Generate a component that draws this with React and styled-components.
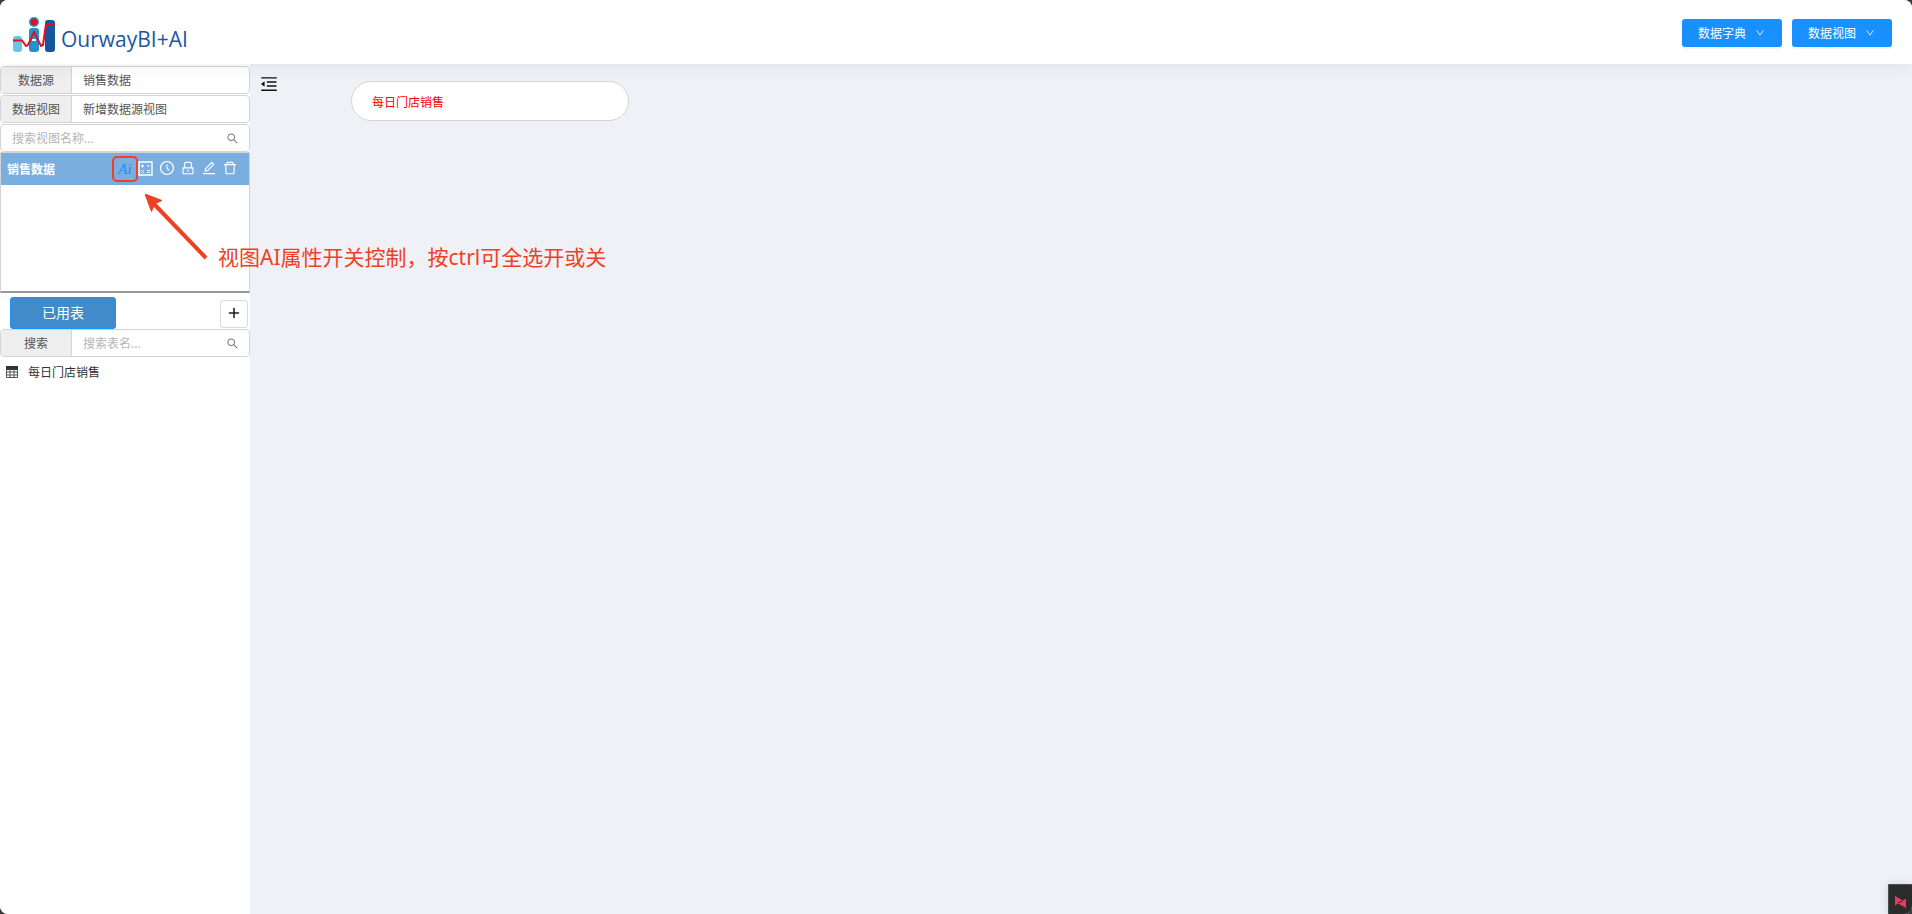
import React, { useState } from 'react'
import styled, { createGlobalStyle } from 'styled-components'
import {
  AiOutlineClockCircle,
  AiOutlineDelete,
  AiOutlineDown,
  AiOutlineEdit,
  AiOutlineLock,
  AiOutlineMenuFold,
  AiOutlinePlus,
  AiOutlineSearch,
} from 'react-icons/ai'

const Logo = () => (
  <svg width="42" height="36" viewBox="0 0 42 36" aria-hidden="true">
    <rect x="0" y="19" width="9" height="16" rx="3" fill="#6cc3ea" />
    <rect x="16" y="11" width="10" height="24" rx="3" fill="#2590d0" />
    <rect x="32" y="3" width="10" height="32" rx="3" fill="#15569f" />
    <circle cx="21" cy="5" r="5" fill="#2590d0" />
    <circle cx="21" cy="5" r="3.4" fill="#dc1420" />
    <rect x="19" y="22" width="4" height="2" fill="#fff" />
    <path d="M0 23.500h9l4 5.500 2-1 6-13 7 14 2-1 3-21h9" fill="none" stroke="#dc1420" strokeWidth="2" />
  </svg>
)

const CalcIcon = () => (
  <svg width="15" height="15" viewBox="0 0 15 15" fill="none" stroke="currentColor" aria-hidden="true">
    <path d="M1 1h13v13H1z" strokeWidth="1.400" />
    <path d="M3 5h3M4.500 3.500v3M9 5h3M3.300 9.300l2.400 2.400M5.700 9.300l-2.400 2.400M9 9.500h3M9 11.500h3" />
  </svg>
)

const TableIcon = () => (
  <svg width="12" height="12" viewBox="0 0 12 12" fill="none" aria-hidden="true">
    <path d="M0 0h12v4H0z" fill="#333" />
    <path d="M.5 3v8.500h11V3M0 6h12M0 9h12M4 3v9M8 3v9" stroke="#555" />
  </svg>
)

function App() {
  const [viewName, setViewName] = useState('')
  const [tableName, setTableName] = useState('')

  return (
    <Page>
      <GlobalStyle />
      <Header>
        <Brand href="#">
          <Logo />
          <BrandName>OurwayBI+AI</BrandName>
        </Brand>
        <HeaderActions>
          <DropButton type="button">数据字典<AiOutlineDown size={10} /></DropButton>
          <DropButton type="button">数据视图<AiOutlineDown size={10} /></DropButton>
        </HeaderActions>
      </Header>

      <Body>
        <Sidebar>
          <Group>
            <Addon htmlFor="source">数据源</Addon>
            <Field id="source" defaultValue="销售数据" />
          </Group>
          <Group>
            <Addon htmlFor="view">数据视图</Addon>
            <Field id="view" defaultValue="新增数据源视图" />
          </Group>
          <Group>
            <Field
              aria-label="搜索视图名称"
              placeholder="搜索视图名称..."
              value={viewName}
              onChange={(e) => setViewName(e.target.value)}
            />
            <SearchButton type="button" aria-label="搜索"><AiOutlineSearch size={13} /></SearchButton>
          </Group>

          <ViewList>
            <ViewItem>
              <ViewName>销售数据</ViewName>
              <ViewTools>
                <AiButton type="button"><i>Ai</i></AiButton>
                <ToolButton type="button" aria-label="计算字段"><CalcIcon /></ToolButton>
                <ToolButton type="button" aria-label="定时"><AiOutlineClockCircle size={16} /></ToolButton>
                <ToolButton type="button" aria-label="权限"><AiOutlineLock size={16} /></ToolButton>
                <ToolButton type="button" aria-label="编辑"><AiOutlineEdit size={16} /></ToolButton>
                <ToolButton type="button" aria-label="删除"><AiOutlineDelete size={16} /></ToolButton>
              </ViewTools>
            </ViewItem>
          </ViewList>

          <UsedBar>
            <UsedButton type="button">已用表</UsedButton>
            <AddButton type="button" aria-label="添加表"><AiOutlinePlus size={14} /></AddButton>
          </UsedBar>
          <Group>
            <Addon htmlFor="table">搜索</Addon>
            <Field
              id="table"
              placeholder="搜索表名..."
              value={tableName}
              onChange={(e) => setTableName(e.target.value)}
            />
            <SearchButton type="button" aria-label="搜索"><AiOutlineSearch size={13} /></SearchButton>
          </Group>
          <TableItem><TableIcon />每日门店销售</TableItem>
        </Sidebar>

        <Canvas>
          <FoldButton type="button" aria-label="收起"><AiOutlineMenuFold size={20} /></FoldButton>
          <Node>每日门店销售</Node>
        </Canvas>
      </Body>

      <Hint>
        <svg width="64" height="68" viewBox="0 0 64 68" aria-hidden="true">
          <path d="M9 10L61 64" stroke="#ee4123" strokeWidth="4" />
          <path d="M0 0l17 6.500-7 3-3.500 8z" fill="#ee4123" stroke="#ee4123" />
        </svg>
        <HintText>视图AI属性开关控制，按ctrl可全选开或关</HintText>
      </Hint>

      <Recorder type="button" aria-label="录制">
        <svg width="11" height="12" viewBox="0 0 11 12" aria-hidden="true">
          <path d="M0 0l8 4.500L0 9.500zM11 2.500V12L3 7.500z" fill="#e8385f" />
          <path d="M3 7l5-2.500" stroke="#2b2b2b" />
        </svg>
      </Recorder>
    </Page>
  )
}

export default App

const GlobalStyle = createGlobalStyle`
  * { box-sizing: border-box; }
  body {
    margin: 0;
    background: #3b3b3d;
    font-family: "Noto Sans", "Noto Sans CJK SC", sans-serif;
    font-size: 12px;
    color: #333;
  }
  button, input { font: inherit; color: inherit; }
  button { padding: 0; border: 0; background: none; cursor: pointer; }
`
const Page = styled.div`
  position: relative;
  display: flex;
  flex-direction: column;
  min-height: 100vh;
  overflow: hidden;
  border-radius: 8px;
  background: #f0f1f6;
`
const Header = styled.header`
  position: relative;
  z-index: 1;
  display: flex;
  justify-content: space-between;
  height: 64px;
  padding: 0 20px 0 13px;
  background: #fff;
  box-shadow: 0 2px 16px rgba(0, 0, 0, 0.07);
`
const Brand = styled.a`
  display: flex;
  gap: 6px;
  padding-top: 17px;
  text-decoration: none;
`
const BrandName = styled.span`
  padding-top: 7px;
  color: #1a58a0;
  font-family: "Open Sans", sans-serif;
  font-size: 21px;
  line-height: 30px;
`
const HeaderActions = styled.div`
  display: flex;
  align-items: flex-start;
  gap: 10px;
  padding-top: 19px;
`
const DropButton = styled.button`
  display: flex;
  align-items: center;
  gap: 9px;
  width: 100px;
  height: 28px;
  padding-left: 16px;
  border-radius: 3px;
  background: #1890ff;
  color: #fff;
  box-shadow: 0 2px 0 rgba(0, 0, 0, 0.04);
`
const Body = styled.div`
  display: flex;
  flex: 1;
`
const Sidebar = styled.aside`
  width: 250px;
  padding-top: 2px;
  background: #fff;
`
const Group = styled.div`
  display: flex;
  height: 28px;
  margin-bottom: 1px;
  overflow: hidden;
  border: 1px solid #d4d4d4;
  border-radius: 4px;
  background: #fff;
  color: #555;
`
const Addon = styled.label`
  flex: none;
  width: 71px;
  border-right: 1px solid #d4d4d4;
  background: #eee;
  line-height: 28px;
  text-align: center;
`
const Field = styled.input`
  flex: 1;
  min-width: 0;
  padding: 0 11px;
  border: 0;
  outline: 0;
  background: transparent;
  &::placeholder { color: #b5b5b5; }
`
const SearchButton = styled.button`
  display: flex;
  align-items: center;
  justify-content: center;
  width: 34px;
  color: #777;
`
const ViewList = styled.ul`
  height: 141px;
  margin: -1px 0 4px;
  padding: 0;
  border: 1px solid #d4d4d4;
  border-bottom: 2px solid #999;
  list-style: none;
`
const ViewItem = styled.li`
  display: flex;
  align-items: center;
  justify-content: space-between;
  height: 32px;
  padding: 0 9px 0 6px;
  background: #79aede;
  color: #fff;
`
const ViewName = styled.span`
  font-weight: 700;
`
const ViewTools = styled.div`
  display: flex;
  align-items: center;
`
const ToolButton = styled.button`
  display: flex;
  align-items: center;
  justify-content: center;
  width: 21px;
  height: 28px;
  padding-bottom: 2px;
`
const AiButton = styled(ToolButton)`
  width: 26px;
  height: 26px;
  margin-right: -3px;
  padding: 0;
  border: 2px solid #ee4123;
  border-radius: 5px;
  color: #1890ff;
  font-family: "Liberation Serif", serif;
  font-size: 15px;
`
const UsedBar = styled.div`
  display: flex;
  align-items: flex-end;
  justify-content: space-between;
  height: 32px;
  padding: 0 2px 0 10px;
`
const UsedButton = styled.button`
  width: 106px;
  height: 32px;
  padding-bottom: 2px;
  border: 1px solid #1890ff;
  border-radius: 3px;
  background: #428bca;
  color: #fff;
  font-size: 14px;
`
const AddButton = styled.button`
  display: flex;
  align-items: center;
  justify-content: center;
  width: 28px;
  height: 28px;
  margin-bottom: 1px;
  padding-bottom: 2px;
  border: 1px solid #d9d9d9;
  border-radius: 3px;
  background: #fff;
  color: #111;
  svg { stroke: currentColor; stroke-width: 30px; }
`
const TableItem = styled.div`
  display: flex;
  align-items: center;
  gap: 10px;
  height: 28px;
  padding-left: 6px;
`
const Canvas = styled.main`
  display: flex;
  flex: 1;
  align-items: flex-start;
  gap: 72px;
  padding: 10px 9px;
`
const FoldButton = styled.button`
  display: flex;
  color: #111;
`
const Node = styled.div`
  width: 278px;
  height: 40px;
  margin-top: 7px;
  padding-left: 20px;
  border: 1px solid #d4d4d4;
  border-radius: 20px;
  background: #fff;
  color: #f00;
  line-height: 42px;
`
const Hint = styled.div`
  position: absolute;
  top: 194px;
  left: 145px;
  z-index: 2;
  display: flex;
  align-items: flex-end;
  gap: 9px;
  color: #ee4123;
  pointer-events: none;
`
const HintText = styled.span`
  font-size: 21px;
  line-height: 10px;
  white-space: nowrap;
`
const Recorder = styled.button`
  position: absolute;
  right: 0;
  bottom: 0;
  display: flex;
  align-items: center;
  justify-content: center;
  width: 24px;
  height: 30px;
  padding-top: 4px;
  border: 1px solid #4c5250;
  border-width: 1px 0 0 1px;
  background: #2b2b2b;
  box-shadow: 0 0 8px rgba(0, 0, 0, 0.15);
`
